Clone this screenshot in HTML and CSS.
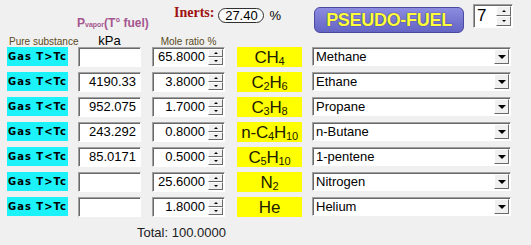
FILE: index.html
```html
<!DOCTYPE html>
<html lang="en">
<head>
  <meta charset="UTF-8">
  <title>Pseudo-fuel composition</title>
  <link rel="stylesheet" href="styles.css">
</head>
<body>
  <div class="panel">
    <div class="top">
      <div class="pvapor">P<sub>vapor</sub>(T° fuel)</div>
      <div class="inerts">
        <span class="inerts-label">Inerts:</span>
        <span class="pill">27.40</span>
        <span class="pct">%</span>
      </div>
      <button class="pseudo">PSEUDO-FUEL</button>
      <div class="spin count">
        <span class="spin-val">7</span>
        <span class="spin-btns"><span class="up"></span><span class="down"></span></span>
      </div>
    </div>

    <div class="grid heads">
      <div class="h-sub">Pure substance</div>
      <div class="h-kpa">kPa</div>
      <div class="h-mole">Mole ratio %</div>
    </div>

    <div class="grid rows">
      <div class="state">Gas T&gt;Tc</div>
      <div class="field"></div>
      <div class="spin mole"><span class="spin-val">65.8000</span><span class="spin-btns"><span class="up"></span><span class="down"></span></span></div>
      <div class="formula">CH<sub>4</sub></div>
      <div class="combo"><span class="combo-text">Methane</span><span class="combo-btn"></span></div>

      <div class="state">Gas T&lt;Tc</div>
      <div class="field">4190.33</div>
      <div class="spin mole"><span class="spin-val">3.8000</span><span class="spin-btns"><span class="up"></span><span class="down"></span></span></div>
      <div class="formula">C<sub>2</sub>H<sub>6</sub></div>
      <div class="combo"><span class="combo-text">Ethane</span><span class="combo-btn"></span></div>

      <div class="state">Gas T&lt;Tc</div>
      <div class="field">952.075</div>
      <div class="spin mole"><span class="spin-val">1.7000</span><span class="spin-btns"><span class="up"></span><span class="down"></span></span></div>
      <div class="formula">C<sub>3</sub>H<sub>8</sub></div>
      <div class="combo"><span class="combo-text">Propane</span><span class="combo-btn"></span></div>

      <div class="state">Gas T&lt;Tc</div>
      <div class="field">243.292</div>
      <div class="spin mole"><span class="spin-val">0.8000</span><span class="spin-btns"><span class="up"></span><span class="down"></span></span></div>
      <div class="formula">n-C<sub>4</sub>H<sub>10</sub></div>
      <div class="combo"><span class="combo-text">n-Butane</span><span class="combo-btn"></span></div>

      <div class="state">Gas T&lt;Tc</div>
      <div class="field">85.0171</div>
      <div class="spin mole"><span class="spin-val">0.5000</span><span class="spin-btns"><span class="up"></span><span class="down"></span></span></div>
      <div class="formula">C<sub>5</sub>H<sub>10</sub></div>
      <div class="combo"><span class="combo-text">1-pentene</span><span class="combo-btn"></span></div>

      <div class="state">Gas T&gt;Tc</div>
      <div class="field"></div>
      <div class="spin mole"><span class="spin-val">25.6000</span><span class="spin-btns"><span class="up"></span><span class="down"></span></span></div>
      <div class="formula">N<sub>2</sub></div>
      <div class="combo"><span class="combo-text">Nitrogen</span><span class="combo-btn"></span></div>

      <div class="state">Gas T&gt;Tc</div>
      <div class="field"></div>
      <div class="spin mole"><span class="spin-val">1.8000</span><span class="spin-btns"><span class="up"></span><span class="down"></span></span></div>
      <div class="formula">He</div>
      <div class="combo"><span class="combo-text">Helium</span><span class="combo-btn"></span></div>
    </div>

    <div class="total">Total: 100.0000</div>
  </div>
</body>
</html>
```

FILE: styles.css
```css
body {
  margin: 0;
  background: #f0f0f0;
  font-family: 'Liberation Sans', Arial, sans-serif;
  font-size: 13px;
  color: #000;
}
.panel {
  width: 531px;
  height: 245px;
  padding-left: 7px;
  box-sizing: border-box;
}
.top {
  display: flex;
  align-items: flex-start;
  height: 33px;
}
.pvapor {
  margin-left: 70px;
  width: 97px;
  margin-top: 16px;
  font-size: 12px;
  font-weight: bold;
  color: #a5568f;
}
.pvapor sub {
  font-size: 7px;
  vertical-align: 0;
}
.inerts {
  width: 140px;
  display: flex;
  align-items: center;
  margin-top: 8px;
}
.inerts-label {
  font-family: 'Liberation Serif', serif;
  font-weight: bold;
  font-size: 14px;
  color: #a01010;
  margin-top: -6px;
}
.pill {
  margin-left: 4px;
  width: 44px;
  height: 13px;
  border: 1px solid #303030;
  border-radius: 8px;
  background: #fafafa;
  text-align: center;
  line-height: 14px;
  font-size: 13px;
}
.pct {
  margin-left: 5px;
  font-size: 13px;
}
.pseudo {
  margin-top: 7px;
  width: 150px;
  height: 26px;
  padding: 0;
  border: 1px solid #4a4aa0;
  border-radius: 6px;
  background: linear-gradient(#8c8ce0, #6464c4);
  color: #ffff3c;
  font-family: 'Liberation Sans', Arial, sans-serif;
  font-size: 18px;
  font-weight: bold;
  letter-spacing: -0.3px;
  text-shadow: 0 0 1px #3a3a80, 0 0 1px #3a3a80;
}
.count {
  margin-left: 9px;
  margin-top: 4px;
  width: 40px;
  height: 24px;
}
.count .spin-val {
  text-align: left;
  font-size: 17px;
  line-height: 22px;
  padding-left: 3px;
}

.grid {
  display: grid;
  grid-template-columns: 71px 74px 85px 75px 199px;
}
.heads {
  height: 14px;
  color: #5a4a1a;
  font-size: 10px;
  align-items: end;
}
.h-sub {
  width: 61px;
  text-align: center;
  white-space: nowrap;
  margin-left: 2px;
}
.h-kpa {
  width: 63px;
  text-align: center;
  font-size: 13px;
  color: #000;
  line-height: 12px;
}
.h-mole {
  width: 73px;
  text-align: center;
}
.rows {
  row-gap: 5px;
  grid-auto-rows: 20px;
}
.state {
  width: 61px;
  height: 19px;
  background: #1cf2fa;
  font-family: 'DejaVu Sans', Verdana, sans-serif;
  font-weight: bold;
  font-size: 10px;
  letter-spacing: 1px;
  line-height: 19px;
  text-align: center;
  white-space: nowrap;
}
.field {
  width: 63px;
  height: 20px;
  box-sizing: border-box;
  background: #fff;
  border: 1px solid;
  border-color: #a0a0a0 #fff #fff #a0a0a0;
  box-shadow: inset 1px 1px #696969;
  text-align: right;
  padding-right: 4px;
  line-height: 18px;
}
.spin {
  display: flex;
  box-sizing: border-box;
  background: #fff;
  border: 1px solid;
  border-color: #a0a0a0 #fff #fff #a0a0a0;
  box-shadow: inset 1px 1px #696969;
}
.mole {
  width: 73px;
  height: 20px;
}
.spin-val {
  flex: 1;
  text-align: right;
  padding-right: 3px;
  line-height: 18px;
}
.spin-btns {
  width: 15px;
  display: flex;
  flex-direction: column;
  padding: 1px 1px 1px 0;
}
.up, .down {
  flex: 1;
  background: #f0f0f0;
  border: 1px solid;
  border-color: #fff #696969 #696969 #fff;
  position: relative;
}
.up::after, .down::after {
  content: '';
  position: absolute;
  left: 50%;
  top: 50%;
  margin-left: -2px;
  border-left: 2px solid transparent;
  border-right: 2px solid transparent;
}
.up::after {
  margin-top: -1px;
  border-bottom: 2px solid #000;
}
.down::after {
  margin-top: -1px;
  border-top: 2px solid #000;
}
.formula {
  width: 65px;
  height: 20px;
  background: #ffff00;
  color: #202000;
  font-family: 'Liberation Sans', Tahoma, sans-serif;
  font-size: 17px;
  line-height: 21px;
  text-align: center;
  white-space: nowrap;
  letter-spacing: -0.2px;
}
.formula sub {
  font-size: 11px;
  vertical-align: -2px;
  line-height: 0;
}
.combo {
  display: flex;
  width: 199px;
  height: 19px;
  box-sizing: border-box;
  background: #fff;
  border: 1px solid;
  border-color: #a0a0a0 #fff #fff #a0a0a0;
  box-shadow: inset 1px 1px #696969;
}
.combo-text {
  flex: 1;
  padding-left: 3px;
  line-height: 17px;
}
.combo-btn {
  width: 15px;
  margin: 1px 1px 1px 0;
  background: #f0f0f0;
  border: 1px solid;
  border-color: #fff #696969 #696969 #fff;
  box-sizing: border-box;
  display: flex;
  align-items: center;
  justify-content: center;
}
.combo-btn::after {
  content: '';
  border-left: 4px solid transparent;
  border-right: 4px solid transparent;
  border-top: 4px solid #000;
}
.total {
  margin-left: 130px;
  margin-top: 8px;
  font-size: 13px;
  color: #202020;
}
```
